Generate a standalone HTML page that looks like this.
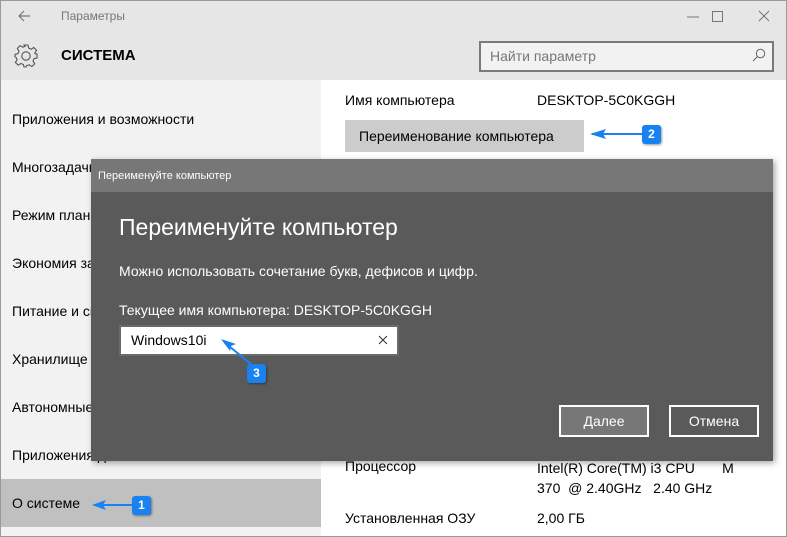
<!DOCTYPE html>
<html><head><meta charset="utf-8"><style>
*{margin:0;padding:0;box-sizing:border-box}
body{width:787px;height:537px;overflow:hidden;font-family:"Liberation Sans","DejaVu Sans",sans-serif;background:#fff;position:relative}
.abs{position:absolute;white-space:nowrap}
#frame{position:absolute;left:0;top:0;width:787px;height:537px;border:1px solid #9a9a9a;pointer-events:none}
#top{position:absolute;left:0;top:0;width:787px;height:80px;background:#e6e6e6}
#left{position:absolute;left:0;top:80px;width:321px;height:457px;background:#f2f2f2}
.item{position:absolute;left:12px;font-size:14px;color:#000}
#sel{position:absolute;left:0;top:479px;width:321px;height:48px;background:#c0c0c0}
.badge{position:absolute;width:19px;height:19px;background:#1a82f0;border-radius:3px;color:#fff;font-size:12px;font-weight:bold;text-align:center;line-height:19px;box-shadow:1px 1px 2px rgba(0,0,0,.4)}
#dlg{position:absolute;left:91px;top:159px;width:682px;height:302px;background:#5a5a5a;box-shadow:2px 2px 6px rgba(0,0,0,.35)}
#dlgt{position:absolute;left:0;top:0;width:682px;height:33px;background:#777;color:#fff;font-size:11px;padding:11px 0 0 7px}
.btn{position:absolute;top:246px;width:90px;height:32px;border:2px solid #fff;color:#fff;font-size:14px;text-align:center;line-height:28px}
</style></head><body>
<div id="top"></div>
<div id="left"></div>
<svg class="abs" style="left:17px;top:9px" width="14" height="14" viewBox="0 0 14 14"><path d="M13 7H2M7 2L2 7l5 5" stroke="#777" stroke-width="1.2" fill="none"/></svg>
<div class="abs" style="left:61px;top:9px;font-size:12px;color:#777">Параметры</div>
<svg class="abs" style="left:687px;top:10px" width="90" height="14"><path d="M0 7h12" stroke="#777"/><rect x="25.5" y="1.5" width="10" height="10" fill="none" stroke="#777"/><path d="M72 1l10 10M82 1l-10 10" stroke="#777"/></svg>
<svg class="abs" style="left:13px;top:43px" width="26" height="26" viewBox="-13 -13 26 26"><g fill="none" stroke="#555" stroke-width="1.1"><circle r="4.2"/><path d="M-2-11h4l.6 3 2.5 1.2 2.7-1.7 2.8 2.8-1.7 2.7L9 -2.2l2 .2v4l-3 .6-1 2.5 1.7 2.7-2.8 2.8-2.7-1.7L.6 9.6 0 11h-2l-.6-2.5-2.5-1L-7.8 9.2-10.6 6.4-8.9 3.7-10 1.4-11 .8v-2.5l3-.7 1-2.5-1.7-2.7 2.8-2.8 2.7 1.7 2.3-1z"/></g></svg>
<div class="abs" style="left:61px;top:47px;font-size:15px;font-weight:bold;color:#000">СИСТЕМА</div>
<div class="abs" style="left:479px;top:41px;width:295px;height:31px;border:2px solid #7a7a7a;background:#f2f2f2"></div>
<div class="abs" style="left:490px;top:48px;font-size:14px;color:#777">Найти параметр</div>
<svg class="abs" style="left:752px;top:48px" width="14" height="14"><circle cx="8.5" cy="5.5" r="4.2" fill="none" stroke="#666"/><path d="M5.5 8.5L1 13" stroke="#666"/></svg>
<div id="sel"></div>
<div class="item" style="top:111px">Приложения и возможности</div>
<div class="item" style="top:159px">Многозадачность</div>
<div class="item" style="top:207px">Режим планшета</div>
<div class="item" style="top:255px">Экономия заряда</div>
<div class="item" style="top:303px">Питание и спящий режим</div>
<div class="item" style="top:351px">Хранилище</div>
<div class="item" style="top:399px">Автономные карты</div>
<div class="item" style="top:447px">Приложения для сайтов</div>
<div class="item" style="top:495px">О системе</div>
<svg class="abs" style="left:92px;top:497px" width="45" height="16"><path d="M2 8h40" stroke="#1a82f0" stroke-width="2"/><path d="M0 8l14-5-3 5 3 5z" fill="#1a82f0"/></svg>
<div class="badge" style="left:132px;top:496px">1</div>
<div class="abs" style="left:345px;top:92px;font-size:14px">Имя компьютера</div>
<div class="abs" style="left:537px;top:92px;font-size:14px">DESKTOP-5C0KGGH</div>
<div class="abs" style="left:345px;top:120px;width:239px;height:32px;background:#ccc;font-size:14px;padding:8px 0 0 14px">Переименование компьютера</div>
<svg class="abs" style="left:590px;top:126px" width="60" height="16"><path d="M2 8h55" stroke="#1a82f0" stroke-width="2"/><path d="M0 8l16-5-3 5 3 5z" fill="#1a82f0"/></svg>
<div class="badge" style="left:642px;top:125px">2</div>
<div class="abs" style="left:345px;top:458px;font-size:14px">Процессор</div>
<div class="abs" style="left:537px;top:458px;font-size:14px;line-height:20px">Intel(R) Core(TM) i3 CPU&nbsp;&nbsp;&nbsp;&nbsp;&nbsp;&nbsp;&nbsp;M<br>370&nbsp; @ 2.40GHz&nbsp;&nbsp; 2.40 GHz</div>
<div class="abs" style="left:345px;top:510px;font-size:14px">Установленная ОЗУ</div>
<div class="abs" style="left:537px;top:510px;font-size:14px">2,00 ГБ</div>
<div id="dlg">
<div id="dlgt">Переименуйте компьютер</div>
<div class="abs" style="left:28px;top:55px;font-size:23px;color:#fff">Переименуйте компьютер</div>
<div class="abs" style="left:28px;top:104px;font-size:14px;color:#fff">Можно использовать сочетание букв, дефисов и цифр.</div>
<div class="abs" style="left:28px;top:143px;font-size:14px;color:#fff">Текущее имя компьютера: DESKTOP-5C0KGGH</div>
<div class="abs" style="left:28px;top:166px;width:280px;height:31px;background:#fff;border:2px solid #6a6a6a"></div>
<div class="abs" style="left:40px;top:173px;font-size:14px;color:#000">Windows10i</div>
<svg class="abs" style="left:287px;top:176px" width="10" height="10"><path d="M1 1l8 8M9 1L1 9" stroke="#333"/></svg>
<svg class="abs" style="left:130px;top:180px" width="40" height="35"><path d="M3 3L36 30" stroke="#1a82f0" stroke-width="2"/><path d="M0 0l15 5-5 2-1 5z" fill="#1a82f0"/></svg>
<div class="badge" style="left:156px;top:205px">3</div>
<div class="btn" style="left:468px;background:#777">Далее</div>
<div class="btn" style="left:578px">Отмена</div>
</div>
<div id="frame"></div>
</body></html>
